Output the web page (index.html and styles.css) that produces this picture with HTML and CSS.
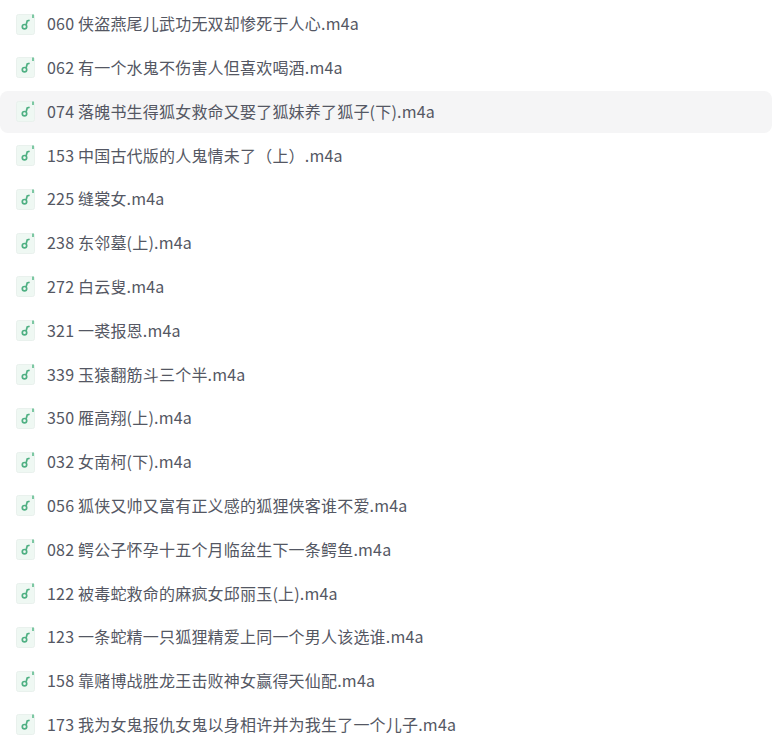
FILE: index.html
```html
<!DOCTYPE html>
<html lang="en">
<head>
  <meta charset="utf-8" />
  <title>Audio files</title>
  <link rel="stylesheet" href="styles.css">
</head>
<body>
  <svg class="sprite" width="0" height="0">
    <symbol id="audio" viewBox="0 0 20 22">
      <rect x="0.5" y="1.5" width="18" height="20" rx="2" fill="#eff8f3" stroke="#e9f1ed"/>
      <path d="M17 1.5V5" stroke="#3fae78" stroke-width="1.3"/>
      <circle cx="8.5" cy="13.7" r="2.2" fill="none" stroke="#4fb083" stroke-width="1.7"/>
      <path d="M10 12.2L11.2 8l2.4-.7" fill="none" stroke="#4fb083" stroke-width="1.7"/>
    </symbol>
  </svg>
  <ul class="file-list">
    <li class="file-row"><svg class="file-icon"><use href="#audio"/></svg><span class="file-name">060 侠盗燕尾儿武功无双却惨死于人心.m4a</span></li>
    <li class="file-row"><svg class="file-icon"><use href="#audio"/></svg><span class="file-name">062 有一个水鬼不伤害人但喜欢喝酒.m4a</span></li>
    <li class="file-row active"><svg class="file-icon"><use href="#audio"/></svg><span class="file-name">074 落魄书生得狐女救命又娶了狐妹养了狐子(下).m4a</span></li>
    <li class="file-row"><svg class="file-icon"><use href="#audio"/></svg><span class="file-name">153 中国古代版的人鬼情未了（上）.m4a</span></li>
    <li class="file-row"><svg class="file-icon"><use href="#audio"/></svg><span class="file-name">225 缝裳女.m4a</span></li>
    <li class="file-row"><svg class="file-icon"><use href="#audio"/></svg><span class="file-name">238 东邻墓(上).m4a</span></li>
    <li class="file-row"><svg class="file-icon"><use href="#audio"/></svg><span class="file-name">272 白云叟.m4a</span></li>
    <li class="file-row"><svg class="file-icon"><use href="#audio"/></svg><span class="file-name">321 一裘报恩.m4a</span></li>
    <li class="file-row"><svg class="file-icon"><use href="#audio"/></svg><span class="file-name">339 玉猿翻筋斗三个半.m4a</span></li>
    <li class="file-row"><svg class="file-icon"><use href="#audio"/></svg><span class="file-name">350 雁高翔(上).m4a</span></li>
    <li class="file-row"><svg class="file-icon"><use href="#audio"/></svg><span class="file-name">032 女南柯(下).m4a</span></li>
    <li class="file-row"><svg class="file-icon"><use href="#audio"/></svg><span class="file-name">056 狐侠又帅又富有正义感的狐狸侠客谁不爱.m4a</span></li>
    <li class="file-row"><svg class="file-icon"><use href="#audio"/></svg><span class="file-name">082 鳄公子怀孕十五个月临盆生下一条鳄鱼.m4a</span></li>
    <li class="file-row"><svg class="file-icon"><use href="#audio"/></svg><span class="file-name">122 被毒蛇救命的麻疯女邱丽玉(上).m4a</span></li>
    <li class="file-row"><svg class="file-icon"><use href="#audio"/></svg><span class="file-name">123 一条蛇精一只狐狸精爱上同一个男人该选谁.m4a</span></li>
    <li class="file-row"><svg class="file-icon"><use href="#audio"/></svg><span class="file-name">158 靠赌博战胜龙王击败神女赢得天仙配.m4a</span></li>
    <li class="file-row"><svg class="file-icon"><use href="#audio"/></svg><span class="file-name">173 我为女鬼报仇女鬼以身相许并为我生了一个儿子.m4a</span></li>
  </ul>
</body>
</html>
```

FILE: styles.css
```css
html, body {
  height: 100%;
  overflow: hidden;
}

body {
  margin: 0;
  background-color: #fff;
  color: #545763;
  font-family: "Noto Sans CJK SC", "Noto Sans", sans-serif;
  font-size: 16px;
  letter-spacing: 0.2px;
}

.sprite {
  display: block;
}

.file-list {
  list-style: none;
  margin: 0;
  padding: 3.3px 9px 0 0;
  display: flex;
  flex-direction: column;
  gap: 2px;
}

.file-row {
  display: flex;
  align-items: center;
  gap: 11px;
  flex: none;
  height: 41.8px;
  padding-left: 16px;
  border-radius: 8px;
  white-space: nowrap;
}

.file-row.active {
  background-color: #f5f5f6;
}

.file-icon {
  width: 20px;
  height: 22px;
  flex: none;
  margin-bottom: 1px;
}

.file-name {
  padding-bottom: 2px;
}
```
